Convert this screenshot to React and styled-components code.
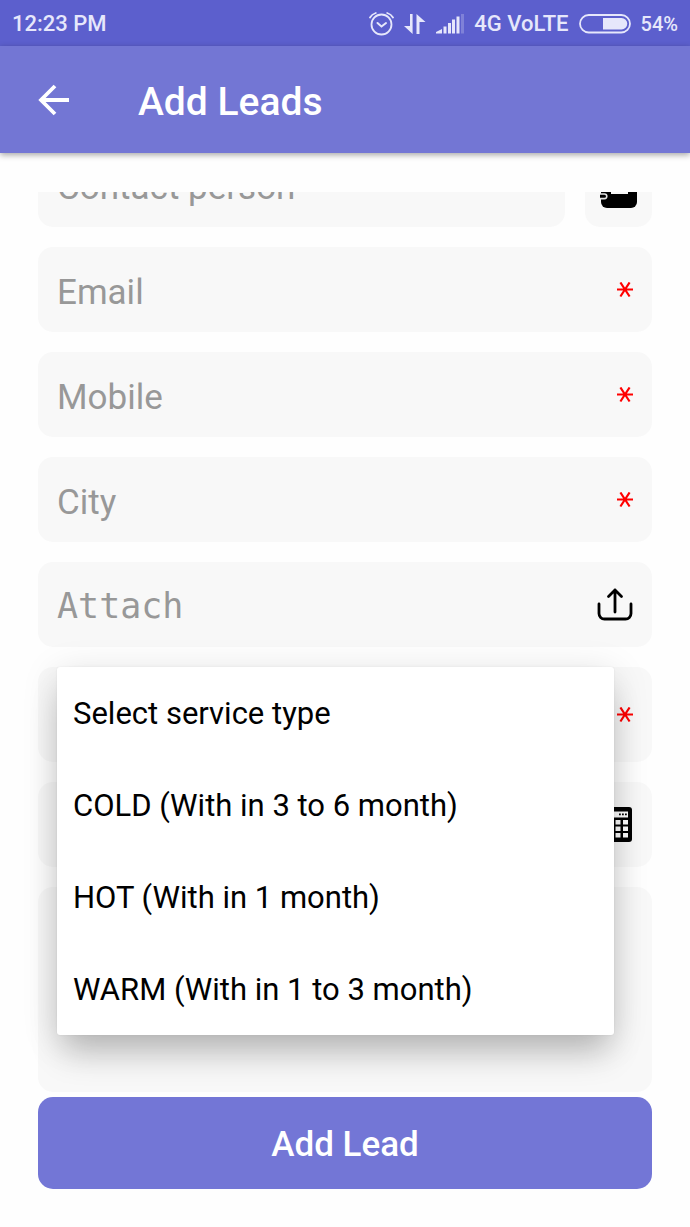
import { useLayoutEffect, useRef, useState } from "react";
import styled, { createGlobalStyle } from "styled-components";

const GlobalStyle = createGlobalStyle`
  * {
    box-sizing: border-box;
  }
  body {
    margin: 0;
    background: #fff;
    font-family: Roboto, sans-serif;
  }
`;

const Screen = styled.div`
  display: flex;
  flex-direction: column;
  height: 100vh;
  background: #fefefe;
`;

const StatusBar = styled.div`
  display: flex;
  align-items: center;
  justify-content: space-between;
  height: 46px;
  flex: none;
  padding: 2px 12px 0;
  background: #5c5fcd;
  color: #e6e7fb;
  font-size: 22px;
  font-weight: 500;
  line-height: 28px;
`;

const StatusIcons = styled.div`
  display: flex;
  align-items: center;
  gap: 10px;

  svg {
    display: block;
    flex: none;
  }
`;

const Percent = styled.span`
  font-size: 20px;
`;

const AppBar = styled.header`
  display: flex;
  align-items: center;
  gap: 69px;
  height: 107px;
  flex: none;
  padding: 0 38px;
  background: #7376d4;
  color: #fff;
  box-shadow: 0 2px 6px rgba(0, 0, 0, 0.35);
`;

const IconButton = styled.button`
  display: flex;
  flex: none;
  padding: 0;
  border: 0;
  background: none;
  color: inherit;
  cursor: pointer;

  svg {
    display: block;
  }
`;

const Title = styled.h1`
  margin: 0;
  padding-top: 4px;
  font-size: 39px;
  font-weight: 500;
  line-height: 48px;
`;

const Form = styled.form`
  display: flex;
  flex-direction: column;
  flex: 1;
  min-height: 0;
  padding: 39px 0 38px;
`;

const Fields = styled.div`
  display: flex;
  flex-direction: column;
  flex: 1;
  gap: 20px;
  min-height: 0;
  padding: 0 38px 5px;
  overflow-x: hidden;
  overflow-y: auto;
  scrollbar-width: none;
`;

const Row = styled.div`
  display: flex;
  flex: none;
  gap: 20px;
`;

const Field = styled.div`
  position: relative;
  display: flex;
  align-items: center;
  flex: ${props => (props.$grow ? "1" : "none")};
  height: ${props => props.$height || 85}px;
  min-width: 0;
  padding: 0 19px;
  border-radius: 15px;
  background: #f8f8f8;
`;

const SquareField = styled(Field)`
  justify-content: center;
  width: 67px;
  padding: 0;
`;

const Input = styled.input`
  flex: 1;
  min-width: 0;
  height: 100%;
  padding: ${props => (props.$mono ? "2px" : "6px")} 0 0;
  border: 0;
  outline: 0;
  background: none;
  color: #333;
  font-family: ${props =>
    props.$mono ? '"DejaVu Sans Mono", monospace' : "Roboto, sans-serif"};
  font-size: 35px;

  &::placeholder {
    color: #989898;
    opacity: 1;
  }
`;

const Select = styled.select`
  flex: 1;
  min-width: 0;
  height: 100%;
  padding: 0;
  border: 0;
  outline: 0;
  appearance: none;
  background: none;
  color: #000;
  font-family: inherit;
  font-size: 31px;
`;

const Notes = styled.textarea`
  flex: 1;
  align-self: stretch;
  padding: 20px 0;
  border: 0;
  outline: 0;
  resize: none;
  background: none;
  font-family: inherit;
  font-size: 35px;
`;

const Menu = styled.div`
  position: absolute;
  top: 0;
  left: 19px;
  right: 38px;
  z-index: 1;
  display: flex;
  flex-direction: column;
  border-radius: 3px;
  background: #fff;
  box-shadow: 0 24px 32px -6px rgba(0, 0, 0, 0.2),
    0 6px 36px rgba(0, 0, 0, 0.13), 0 0 2px rgba(0, 0, 0, 0.08);
`;

const MenuItem = styled.button`
  height: 92px;
  padding: 2px 16px 0;
  border: 0;
  background: none;
  color: #000;
  font-family: inherit;
  font-size: 31px;
  line-height: 40px;
  text-align: left;
  cursor: pointer;
`;

const SubmitButton = styled.button`
  flex: none;
  height: 92px;
  margin: 0 38px;
  padding: 2px 0 0;
  border: 0;
  border-radius: 15px;
  background: #7376d6;
  color: #fff;
  font-family: inherit;
  font-size: 35px;
  font-weight: 500;
  cursor: pointer;
`;

const AlarmIcon = () => (
  <svg width="25" height="25" viewBox="0 0 25 25" fill="none" stroke="currentColor" strokeLinecap="round">
    <circle cx="12.5" cy="12.5" r="10" strokeWidth="1.8" />
    <path d="M8.5 11l4 3.5 4.5-3.5" strokeWidth="2" />
    <path d="M1 5.5C2.3 3.2 4.3 1.8 6.8 1M24 5.5C22.7 3.2 20.7 1.8 18.2 1" strokeWidth="1.8" />
  </svg>
);

const DataIcon = () => (
  <svg width="22" height="20" viewBox="0 0 22 20" fill="currentColor">
    <path d="M6 0h2.6v20L0 12h6z" />
    <path d="M12.5 0l9 8h-6v12h-3z" />
  </svg>
);

const SignalIcon = () => (
  <svg width="28" height="20" viewBox="0 0 28 20" fill="currentColor">
    <path d="M0 19.5V18l6-3v4.5zM7.500 12.500h3v7h-3zM12 9h3v10.500h-3zM16 5.500h3v14h-3zM20.500 2.500h3v17h-3z" />
    <path d="M25 0h3v19.5h-3z" opacity="0.25" />
  </svg>
);

const BatteryIcon = () => (
  <svg width="52" height="20" viewBox="0 0 52 20">
    <rect x="1" y="1" width="50" height="17.5" rx="8.75" fill="none" stroke="currentColor" strokeWidth="1.8" />
    <path d="M24 4h18.5a5.75 5.75 0 0 1 0 11.5H24z" fill="currentColor" />
  </svg>
);

const BackIcon = () => (
  <svg width="31" height="32" viewBox="0 0 31 32" fill="none" stroke="currentColor" strokeWidth="3.8">
    <path d="M17 2L3 16l14 14M3 16h28" />
  </svg>
);

const RequiredIcon = () => (
  <svg width="16" height="16" viewBox="0 0 16 16" fill="none" stroke="#f00" strokeWidth="2.2">
    <path d="M0 7.500h16M3.400 0.500l9.200 14M12.600 0.500l-9.200 14" />
  </svg>
);

const ContactsIcon = () => (
  <svg width="38" height="46" viewBox="0 0 38 46">
    <path d="M1 5a5 5 0 0 1 5-5h26a5 5 0 0 1 5 5v35a6 6 0 0 1-6 6H7a6 6 0 0 1-6-6z" fill="#000" />
    <path d="M11 25v7h17v-7c0-3-3-5-8.5-5S11 22 11 25z" fill="#f8f8f8" />
    <circle cx="19.500" cy="12" r="5" fill="#f8f8f8" />
    <path
      d="M0 32h4.500a2.200 2.200 0 0 1 0 4.600H0M0 9h4.500a2.200 2.200 0 0 1 0 4.600H0"
      fill="#000"
      stroke="#e4e4e4"
      strokeWidth="1.6"
    />
  </svg>
);

const UploadIcon = () => (
  <svg width="36" height="34" viewBox="0 0 36 34" fill="none" stroke="#000" strokeWidth="2.8" strokeLinecap="round" strokeLinejoin="round">
    <path d="M2 16v9.5a5.500 5.500 0 0 0 5.500 5.500h21a5.500 5.500 0 0 0 5.500-5.500V16" />
    <path d="M18 24V2M11.500 8.500L18 2l6.500 6.500" />
  </svg>
);

const CalendarIcon = () => (
  <svg width="35" height="35" viewBox="0 0 35 35">
    <rect width="34" height="35" rx="3" fill="#000" />
    <path d="M4 4.500h26v6H4z" fill="#fff" />
    <path d="M21 6.500h1.800v1.800H21zM24 6.500h1.800v1.800H24zM27 6.500h1.800v1.800H27z" fill="#000" />
    <path
      d="M3 13h5v4.500H3zM10 13h5v4.500h-5zM17.500 13h5v4.500h-5zM25 13h5v4.500h-5zM3 19.500h5v4.500H3zM10 19.500h5v4.500h-5zM17.500 19.500h5v4.500h-5zM25 19.500h5v4.500h-5zM3 26h5v4.500H3zM10 26h5v4.500h-5zM17.500 26h5v4.500h-5zM25 26h5v4.500h-5z"
      fill="#fff"
    />
  </svg>
);

const serviceTypes = [
  "Select service type",
  "COLD (With in 3 to 6 month)",
  "HOT (With in 1 month)",
  "WARM (With in 1 to 3 month)"
];

const RequiredField = ({ label, type }) => (
  <Field>
    <Input type={type} placeholder={label} aria-label={label} required />
    <RequiredIcon />
  </Field>
);

const ServiceField = () => {
  const [open, setOpen] = useState(true);
  const [service, setService] = useState(serviceTypes[0]);

  const choose = type => {
    setService(type);
    setOpen(false);
  };

  return (
    <Field $height={95}>
      <Select
        aria-label="Service type"
        value={service}
        onChange={e => setService(e.target.value)}
      >
        {serviceTypes.map(type => (
          <option key={type}>{type}</option>
        ))}
      </Select>
      <RequiredIcon />
      {open && (
        <Menu role="listbox" aria-label="Service type">
          {serviceTypes.map(type => (
            <MenuItem
              key={type}
              type="button"
              role="option"
              aria-selected={type === service}
              onClick={() => choose(type)}
            >
              {type}
            </MenuItem>
          ))}
        </Menu>
      )}
    </Field>
  );
};

const App = () => {
  const fields = useRef(null);

  // the form opens scrolled down to its last field
  useLayoutEffect(() => {
    fields.current.scrollTop = fields.current.scrollHeight;
  }, []);

  return (
    <Screen>
      <GlobalStyle />
      <StatusBar>
        <span>12:23 PM</span>
        <StatusIcons>
          <AlarmIcon />
          <DataIcon />
          <SignalIcon />
          <span>4G VoLTE</span>
          <BatteryIcon />
          <Percent>54%</Percent>
        </StatusIcons>
      </StatusBar>
      <AppBar>
        <IconButton type="button" aria-label="Back">
          <BackIcon />
        </IconButton>
        <Title>Add Leads</Title>
      </AppBar>
      <Form onSubmit={e => e.preventDefault()}>
        <Fields ref={fields}>
          <Row>
            <Field $grow>
              <Input placeholder="Contact person" aria-label="Contact person" />
            </Field>
            <SquareField>
              <IconButton type="button" aria-label="Pick a contact">
                <ContactsIcon />
              </IconButton>
            </SquareField>
          </Row>
          <RequiredField label="Email" type="email" />
          <RequiredField label="Mobile" type="tel" />
          <RequiredField label="City" type="text" />
          <Field>
            <Input $mono placeholder="Attach" aria-label="Attach" readOnly />
            <IconButton type="button" aria-label="Upload a file">
              <UploadIcon />
            </IconButton>
          </Field>
          <ServiceField />
          <Field>
            <Input aria-label="Date" />
            <IconButton type="button" aria-label="Pick a date">
              <CalendarIcon />
            </IconButton>
          </Field>
          <Field $height={205}>
            <Notes aria-label="Notes" />
          </Field>
        </Fields>
        <SubmitButton type="submit">Add Lead</SubmitButton>
      </Form>
    </Screen>
  );
};

export default App;
